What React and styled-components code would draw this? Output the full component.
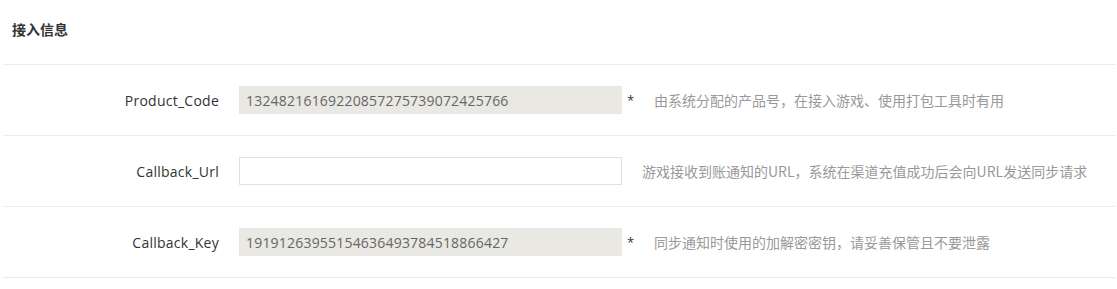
import React from "react";
import styled, { createGlobalStyle } from "styled-components";

const Global = createGlobalStyle`
  html, body { margin: 0; padding: 0; background: #fff; }
  body { font-family: "Open Sans", "Noto Sans CJK SC", sans-serif; }
`;

const Panel = styled.div`
  width: 1113px;
  margin-left: 3px;
`;

const Title = styled.div`
  box-sizing: border-box;
  height: 65px;
  display: flex;
  align-items: center;
  padding: 0 0 6px 9px;
  font-family: "Noto Sans CJK SC", sans-serif;
  font-size: 14px;
  font-weight: 700;
  color: #333;
  border-bottom: 1px solid #ebebeb;
`;

const Row = styled.div`
  height: 70px;
  display: flex;
  align-items: center;
  border-bottom: 1px solid #ebebeb;
`;

const Label = styled.div`
  width: 216px;
  text-align: right;
  font-size: 14px;
  letter-spacing: 0.25px;
  color: #333;
  margin-right: 20px;
`;

const Field = styled.input`
  box-sizing: border-box;
  width: 383px;
  height: 28px;
  padding: 0 6px;
  border: 1px solid ${(p) => (p.readOnly ? "#e9e8e2" : "#e1e1e1")};
  background: ${(p) => (p.readOnly ? "#e9e8e2" : "#fff")};
  font-family: "Open Sans", sans-serif;
  font-size: 14px;
  letter-spacing: 0.2px;
  color: #666;
  outline: none;
`;

const Star = styled.span`
  margin-left: 5px;
  font-size: 13px;
  color: #333;
  width: 7px;
`;

const Help = styled.span`
  margin-left: 20px;
  font-family: "Noto Sans CJK SC", sans-serif;
  font-size: 14px;
  color: #999;
`;

const rows = [
  { label: "Product_Code", value: "13248216169220857275739072425766", star: true, help: "由系统分配的产品号，在接入游戏、使用打包工具时有用" },
  { label: "Callback_Url", value: "", star: false, help: "游戏接收到账通知的URL，系统在渠道充值成功后会向URL发送同步请求" },
  { label: "Callback_Key", value: "19191263955154636493784518866427", star: true, help: "同步通知时使用的加解密密钥，请妥善保管且不要泄露" },
];

export default function App() {
  return (
    <>
      <Global />
      <Panel>
        <Title>接入信息</Title>
        {rows.map((r) => (
          <Row key={r.label}>
            <Label>{r.label}</Label>
            <Field readOnly={r.star} defaultValue={r.value} />
            {r.star && <Star>*</Star>}
            <Help>{r.help}</Help>
          </Row>
        ))}
      </Panel>
    </>
  );
}
